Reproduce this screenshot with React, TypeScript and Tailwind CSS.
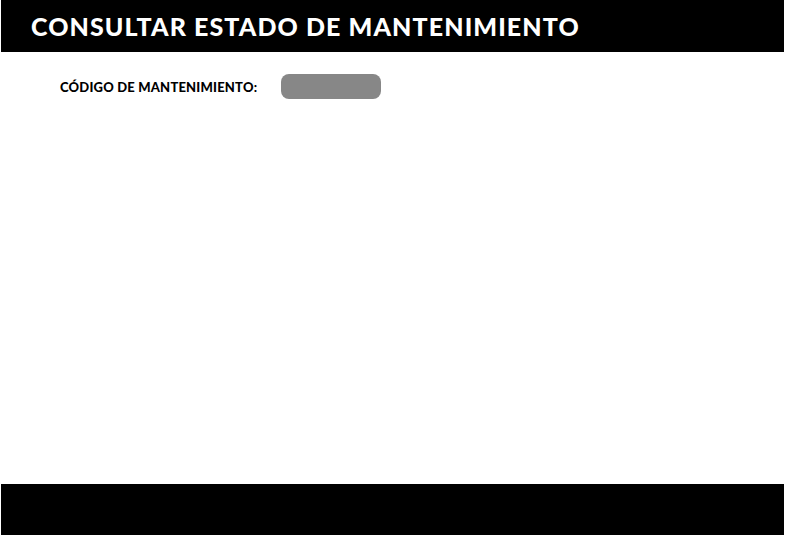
import React from 'react';

const App: React.FC = () => {
  return (
    <div className="w-[785px] h-[535px] bg-white flex flex-col px-px" style={{ fontFamily: 'Lato, "Open Sans", sans-serif' }}>
      {/* Header */}
      <header className="h-[52px] bg-black flex items-center pl-[30px]">
        <h1 className="text-white text-[25px] font-black tracking-[1.1px] leading-none">CONSULTAR ESTADO DE MANTENIMIENTO</h1>
      </header>

      {/* Form */}
      <main className="flex-1">
        <div className="flex items-center mt-[22px] pl-[59px]">
          <label className="text-black text-[13px] font-black tracking-[0.2px] w-[221px] pt-[3px]">CÓDIGO DE MANTENIMIENTO:</label>
          <div className="w-[100px] h-[25px] rounded-[8px] bg-[#878787]" />
        </div>
      </main>

      {/* Footer */}
      <footer className="h-[51px] bg-black" />
    </div>
  );
};

export default App;
